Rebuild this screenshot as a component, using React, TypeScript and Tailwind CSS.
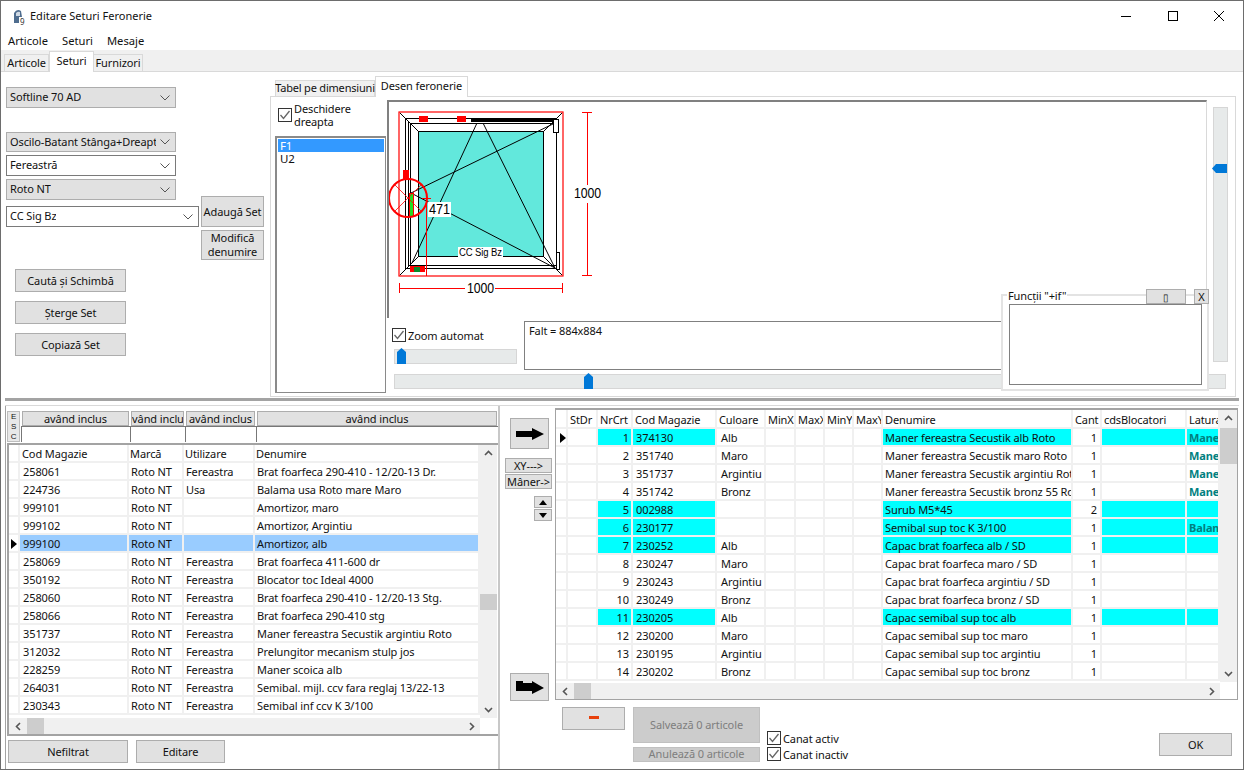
import { ReactNode } from 'react';

const leftRows = [
  ['258061', 'Roto NT', 'Fereastra', 'Brat foarfeca 290-410 - 12/20-13 Dr.'],
  ['224736', 'Roto NT', 'Usa', 'Balama usa Roto mare Maro'],
  ['999101', 'Roto NT', '', 'Amortizor, maro'],
  ['999102', 'Roto NT', '', 'Amortizor, Argintiu'],
  ['999100', 'Roto NT', '', 'Amortizor, alb'],
  ['258069', 'Roto NT', 'Fereastra', 'Brat foarfeca 411-600 dr'],
  ['350192', 'Roto NT', 'Fereastra', 'Blocator toc Ideal 4000'],
  ['258060', 'Roto NT', 'Fereastra', 'Brat foarfeca 290-410 - 12/20-13 Stg.'],
  ['258066', 'Roto NT', 'Fereastra', 'Brat foarfeca 290-410 stg'],
  ['351737', 'Roto NT', 'Fereastra', 'Maner fereastra Secustik argintiu Roto'],
  ['312032', 'Roto NT', 'Fereastra', 'Prelungitor mecanism stulp jos'],
  ['228259', 'Roto NT', 'Fereastra', 'Maner scoica alb'],
  ['264031', 'Roto NT', 'Fereastra', 'Semibal. mijl. ccv fara reglaj 13/22-13'],
  ['230343', 'Roto NT', 'Fereastra', 'Semibal inf ccv K 3/100'],
];

// nr, cod, culoare, denumire, cant, latura, cyan
const rightRows: [number, string, string, string, number, string, boolean][] = [
  [1, '374130', 'Alb', 'Maner fereastra Secustik alb Roto', 1, 'Maner', true],
  [2, '351740', 'Maro', 'Maner fereastra Secustik maro Roto', 1, 'Maner', false],
  [3, '351737', 'Argintiu', 'Maner fereastra Secustik argintiu Roto', 1, 'Maner', false],
  [4, '351742', 'Bronz', 'Maner fereastra Secustik bronz 55 Roto', 1, 'Maner', false],
  [5, '002988', '', 'Surub M5*45', 2, '', true],
  [6, '230177', '', 'Semibal sup toc K 3/100', 1, 'Balama', true],
  [7, '230252', 'Alb', 'Capac brat foarfeca alb / SD', 1, '', true],
  [8, '230247', 'Maro', 'Capac brat foarfeca maro / SD', 1, '', false],
  [9, '230243', 'Argintiu', 'Capac brat foarfeca argintiu / SD', 1, '', false],
  [10, '230249', 'Bronz', 'Capac brat foarfeca bronz / SD', 1, '', false],
  [11, '230205', 'Alb', 'Capac semibal sup toc alb', 1, '', true],
  [12, '230200', 'Maro', 'Capac semibal sup toc maro', 1, '', false],
  [13, '230195', 'Argintiu', 'Capac semibal sup toc argintiu', 1, '', false],
  [14, '230202', 'Bronz', 'Capac semibal sup toc bronz', 1, '', false],
];

const rightHead = ['', 'StDr', 'NrCrt', 'Cod Magazie', 'Culoare', 'MinX', 'MaxX', 'MinY', 'MaxY', 'Denumire', 'Cant', 'cdsBlocatori', 'Latura'];

function Btn({ className, children }: { className: string; children: ReactNode }) {
  return (
    <button className={`flex items-center justify-center shrink-0 whitespace-nowrap bg-[#e1e1e1] border border-[#adadad] text-[#111] leading-[14px] ${className}`}>
      {children}
    </button>
  );
}

function Chevron() {
  return (
    <svg width="10" height="6" viewBox="0 0 10 6" className="shrink-0 ml-[4px]">
      <path d="M0.5 0.5 L5 5 L9.5 0.5" fill="none" stroke="#555" strokeWidth="1" />
    </svg>
  );
}

function Combo({ label, white, className }: { label: string; white?: boolean; className: string }) {
  return (
    <div className={`flex items-center justify-between pl-[3px] pr-[5px] border ${white ? 'bg-white border-[#7a7a7a]' : 'bg-[#e1e1e1] border-[#adadad]'} ${className}`}>
      <span className="whitespace-nowrap overflow-hidden">{label}</span>
      <Chevron />
    </div>
  );
}

function Check({ label, className }: { label: ReactNode; className?: string }) {
  return (
    <div className={`flex items-start gap-[2px] ${className ?? ''}`}>
      <span className="w-[14px] h-[14px] border border-[#333] bg-white shrink-0 flex items-center justify-center">
        <svg width="12" height="12" viewBox="0 0 12 12">
          <path d="M1.5 6 L4.5 9.5 L10.5 2" fill="none" stroke="#666" strokeWidth="1.3" />
        </svg>
      </span>
      <span className="leading-[13px] pt-px whitespace-nowrap">{label}</span>
    </div>
  );
}

function Arrow({ dir }: { dir: 'up' | 'down' | 'left' | 'right' }) {
  const d = {
    up: 'M1 6 L4.5 2.5 L8 6',
    down: 'M1 3 L4.5 6.5 L8 3',
    left: 'M6 1 L2.5 4.5 L6 8',
    right: 'M3 1 L6.5 4.5 L3 8',
  }[dir];
  return (
    <svg width="9" height="9" viewBox="0 0 9 9">
      <path d={d} fill="none" stroke="#555" strokeWidth="1.6" />
    </svg>
  );
}

function VScroll({ thumb }: { thumb: string }) {
  return (
    <div className="w-[17px] h-full bg-[#f0f0f0] flex flex-col items-center justify-between relative shrink-0 py-[4px]">
      <Arrow dir="up" />
      <div className={`absolute left-0 w-[17px] bg-[#cdcdcd] ${thumb}`} />
      <Arrow dir="down" />
    </div>
  );
}

function HScroll({ className }: { className: string }) {
  return (
    <div className={`h-[16px] bg-[#f0f0f0] flex items-center shrink-0 ${className}`}>
      <span className="w-[18px] flex justify-center shrink-0"><Arrow dir="left" /></span>
      <div className="w-[17px] h-[16px] bg-[#cdcdcd]" />
      <span className="ml-auto mr-[4px] flex"><Arrow dir="right" /></span>
    </div>
  );
}

function Drawing() {
  const red = '#ff0000';
  return (
    <svg viewBox="389 102 817 216" className="w-full h-full block">
      <rect x="418.5" y="131.5" width="125" height="125" fill="#62e8dc" stroke="#000" />
      <g fill="none" stroke="#000" strokeWidth="1">
        <rect x="405.5" y="118.5" width="151" height="150" />
        <rect x="410.5" y="123.5" width="146" height="142" />
        <path d="M408.5 121 V266 M400 113 L418 131 M562 113 L544 131 M400 275 L418 257 M562 275 L544 257" />
        <path d="M477 123 L412 263 M483 123 L555 268 M555 123 L411 193 L555 268" />
      </g>
      <rect x="399" y="112" width="164" height="164" fill="none" stroke={red} strokeWidth="1.2" />
      <rect x="471" y="118" width="85" height="4" fill="#000" />
      <rect x="553.5" y="119.5" width="5" height="13" fill="#fff" stroke="#000" />
      <rect x="556.5" y="252.5" width="3" height="17" fill="#fff" stroke="#000" />
      <rect x="419" y="116" width="9" height="6" fill={red} />
      <rect x="457" y="116" width="9" height="6" fill={red} />
      <rect x="403" y="170" width="6" height="10" fill={red} />
      <rect x="410" y="266" width="15" height="6" fill={red} />
      <rect x="414" y="267" width="6" height="5" fill="#0a8a2a" />
      <rect x="409.5" y="193.5" width="4" height="23" fill="#22dd22" stroke={red} />
      <circle cx="408" cy="198" r="19" fill="none" stroke={red} strokeWidth="2" />
      <path d="M395 185 L421 211 M421 185 L395 211" stroke={red} strokeWidth="0.8" />
      <path d="M426.5 198 V276 M422 198.5 H431" stroke={red} strokeWidth="1" />
      <rect x="428" y="202" width="23" height="15" fill="#fff" />
      <text x="429" y="214" fontSize="14" fill="#000" textLength="21" lengthAdjust="spacingAndGlyphs">471</text>
      <rect x="458" y="247" width="45" height="10" fill="#fff" />
      <text x="459" y="256" fontSize="10" fill="#000" textLength="43" lengthAdjust="spacingAndGlyphs">CC Sig Bz</text>
      <path d="M587.5 112 V185 M587.5 203 V276 M582 112.5 H592 M582 275.5 H592" stroke={red} strokeWidth="1" />
      <text x="574" y="198" fontSize="14" fill="#000" textLength="27" lengthAdjust="spacingAndGlyphs">1000</text>
      <path d="M399.5 283 V293 M562.5 283 V293 M399 288.5 H465 M495 288.5 H563" stroke={red} strokeWidth="1" />
      <text x="467" y="293" fontSize="14" fill="#000" textLength="27" lengthAdjust="spacingAndGlyphs">1000</text>
    </svg>
  );
}

export default function App() {
  return (
    <div className="relative w-[1244px] h-[770px] box-border overflow-hidden flex flex-col bg-white border border-[#6d6d6d] text-[11px] tracking-[-0.1px] text-[#111] font-['Noto_Sans',sans-serif]">
      {/* title bar */}
      <div className="h-[31px] flex items-center shrink-0">
        <svg width="16" height="18" viewBox="0 0 16 18" className="ml-[10px] mr-[3px]">
          <path d="M3 15 V5 Q6 0 10 3 L11 9 L8 9 L8 15 Z" fill="#4f6d8f" />
          <path d="M5 5 Q7 3 9 4 L9 8 L5 8 Z" fill="#cfd9e4" />
          <text x="9" y="17" fontSize="8" fill="#333">9</text>
        </svg>
        <span className="tracking-normal">Editare Seturi Feronerie</span>
        <div className="ml-auto flex items-center pb-[2px]">
          <svg width="12" height="12" viewBox="0 0 12 12" className="mr-[35px]"><path d="M1 6.5 H11" stroke="#000" /></svg>
          <svg width="12" height="12" viewBox="0 0 12 12" className="mr-[34px]"><rect x="1.5" y="1.5" width="9" height="9" fill="none" stroke="#000" /></svg>
          <svg width="12" height="12" viewBox="0 0 12 12" className="mr-[18px]"><path d="M1 1 L11 11 M11 1 L1 11" stroke="#000" /></svg>
        </div>
      </div>

      {/* menu */}
      <div className="h-[18px] flex items-center gap-[14px] pl-[7px] text-[11.2px] tracking-normal shrink-0">
        <span>Articole</span>
        <span>Seturi</span>
        <span>Mesaje</span>
      </div>

      {/* page tabs */}
      <div className="h-[21px] bg-[#f0f0f0] flex items-end pl-[3px] shrink-0">
        <div className="w-[45px] h-[17px] border border-b-0 border-[#d9d9d9] bg-[#f0f0f0] flex items-center justify-center">Articole</div>
        <div className="w-[45px] h-[21px] border border-b-0 border-[#d9d9d9] bg-white flex items-center justify-center pb-[2px] -mb-px z-10">Seturi</div>
        <div className="w-[49px] h-[17px] border border-b-0 border-l-0 border-[#d9d9d9] bg-[#f0f0f0] flex items-center justify-center">Furnizori</div>
      </div>

      <div className="border-t border-[#d9d9d9] flex-1 flex flex-col min-h-0">
        {/* top pane */}
        <div className="h-[326px] flex shrink-0">
          <div className="w-[269px] shrink-0 pl-[5px] pt-[15px]">
            <Combo label="Softline 70 AD" className="w-[170px] h-[21px]" />
            <div className="flex mt-[24px]">
              <div className="w-[193px] flex flex-col">
                <Combo label="Oscilo-Batant Stânga+Dreapta" className="w-[170px] h-[20px]" />
                <Combo label="Fereastră" white className="w-[170px] h-[21px] mt-[3px]" />
                <Combo label="Roto NT" className="w-[170px] h-[21px] mt-[3px]" />
                <Combo label="CC Sig Bz" white className="w-[193px] h-[21px] mt-[6px]" />
              </div>
              <div className="ml-[2px] mt-[64px] flex flex-col">
                <Btn className="w-[63px] h-[31px]">Adaugă Set</Btn>
                <Btn className="w-[63px] h-[30px] mt-[3px]"><span>Modifică<br />denumire</span></Btn>
              </div>
            </div>
            <div className="ml-[9px] mt-[9px] flex flex-col gap-[9px]">
              <Btn className="w-[111px] h-[23px]">Caută și Schimbă</Btn>
              <Btn className="w-[111px] h-[23px]">Șterge Set</Btn>
              <Btn className="w-[111px] h-[23px]">Copiază Set</Btn>
            </div>
          </div>

          <div className="flex-1 pt-[4px] flex flex-col">
            <div className="h-[20px] flex items-end pl-[5px] shrink-0">
              <div className="w-[100px] h-[16px] border border-b-0 border-[#d9d9d9] bg-[#f0f0f0] flex items-center justify-center whitespace-nowrap tracking-[-0.2px]">Tabel pe dimensiuni</div>
              <div className="w-[93px] h-[21px] border border-b-0 border-[#d9d9d9] bg-white flex items-center justify-center pb-[2px] -mb-px z-10 whitespace-nowrap">Desen feronerie</div>
            </div>
            <div className="w-[966px] h-[301px] border border-[#d9d9d9] flex">
              <div className="w-[116px] shrink-0 pt-[11px] pl-[7px]">
                <Check label={<span className="block -mt-[7px]">Deschidere<br />dreapta</span>} className="h-[28px]" />
                <div className="-ml-[3px] w-[111px] h-[257px] border-2 border-[#8a8a8a] border-r border-b pt-px px-px text-[11.5px] leading-[13px]">
                  <div className="bg-[#3399ff] text-white pl-[2px]">F1</div>
                  <div className="pl-[2px]">U2</div>
                </div>
              </div>
              <div className="flex-1 pt-[3px]">
                <div className="h-[270px] flex">
                  <div className="w-[820px] flex flex-col">
                    <div className="h-[218px] border-t-2 border-l-2 border-[#808080] border-r border-r-[#d9d9d9] bg-white font-['Liberation_Sans',sans-serif]">
                      <Drawing />
                    </div>
                    <div className="h-[52px] flex pl-[5px]">
                      <div className="w-[132px] shrink-0">
                        <Check label="Zoom automat" className="mt-[10px] h-[16px]" />
                        <div className="relative ml-[2px] mt-[5px] w-[123px] h-[15px] bg-[#e7eaea] border border-[#d6d6d6]">
                          <svg width="9" height="16" viewBox="0 0 9 16" className="absolute left-[2px] -top-[2px]"><path d="M0 4 L4.5 0 L9 4 V16 H0 Z" fill="#0078d7" /></svg>
                        </div>
                      </div>
                      <div className="mt-[3px] h-[49px] w-[478px] border border-[#808080] pl-[4px] pt-px">Falt = 884x884</div>
                    </div>
                  </div>
                  <div className="relative ml-[6px] mt-[7px] w-[15px] h-[255px] bg-[#e7eaea] border border-[#d6d6d6]">
                    <svg width="16" height="9" viewBox="0 0 16 9" className="absolute -left-[2px] top-[56px]"><path d="M4 0 L0 4.5 L4 9 H15 V0 Z" fill="#0078d7" /></svg>
                  </div>
                </div>
                <div className="relative ml-[7px] mt-[4px] w-[832px] h-[15px] bg-[#e7eaea] border border-[#d6d6d6]">
                  <svg width="9" height="16" viewBox="0 0 9 16" className="absolute left-[189px] -top-[2px]"><path d="M0 4 L4.5 0 L9 4 V16 H0 Z" fill="#0078d7" /></svg>
                </div>
              </div>
            </div>
          </div>
        </div>

        {/* splitter */}
        <div className="h-[3px] mx-[4px] bg-[#a3a3a3] shrink-0" />

        {/* bottom pane */}
        <div className="mt-[4px] ml-[4px] mr-[4px] border-t border-[#d9d9d9] flex-1 flex min-h-0">
          <div className="w-[495px] shrink-0 border-l border-r-2 border-l-[#a3a3a3] border-r-[#c8c8c8] pl-px pt-[5px]">
            <div className="flex h-[31px]">
              <div className="w-[13px] h-[31px] border border-[#bdbdbd] bg-[#e8e8e8] flex flex-col items-center text-[8px] leading-[10px] font-['Liberation_Sans',sans-serif]">
                <span>E</span><span>S</span><span>C</span>
              </div>
              <div className="grid grid-cols-[109px_55px_71px_242px] pl-[1px]">
                {[0, 1, 2, 3].map((i) => (
                  <div key={i} className="flex flex-col">
                    <div className="h-[15px] mx-px pt-[2px] bg-[#e1e1e1] border border-[#adadad] flex items-center justify-center whitespace-nowrap overflow-hidden">având inclus</div>
                    <div className="h-[16px] bg-white border-t border-l border-[#777]" />
                  </div>
                ))}
              </div>
            </div>
            <div className="mt-px h-[293px] border-l-2 border-t-2 border-b-2 border-[#a3a3a3] flex flex-col">
              <div className="flex h-[273px] shrink-0">
                <div className="w-[471px] shrink-0">
                  {[['', ...['Cod Magazie', 'Marcă', 'Utilizare', 'Denumire']], ...leftRows.map((r) => ['', ...r])].map((r, i) => {
                    const sel = i === 5;
                    return (
                      <div key={i} className="grid grid-cols-[11px_109px_55px_71px_225px] h-[18px]">
                        {r.map((c, j) => (
                          <div key={j} className={`border-r-2 border-b-2 border-[#f0f0f0] overflow-hidden whitespace-nowrap leading-[16px] flex items-center pt-px ${j === 0 ? '' : j === 1 ? (i === 0 ? 'pl-[2px]' : 'pl-[3px]') : i === 0 ? 'pl-[1px]' : 'pl-[2px]'} ${sel && j > 0 ? 'bg-[#99ccff]' : ''}`}>
                            {sel && j === 0 && <span className="w-0 h-0 border-y-[5px] border-y-transparent border-l-[6px] border-l-black ml-[2px]" />}
                            {c}
                          </div>
                        ))}
                      </div>
                    );
                  })}
                </div>
                <VScroll thumb="top-[149px] h-[16px]" />
              </div>
              <HScroll className="w-[471px]" />
            </div>
            <div className="flex mt-[4px] ml-[1px] gap-[8px]">
              <Btn className="w-[120px] h-[23px]">Nefiltrat</Btn>
              <Btn className="w-[89px] h-[23px]">Editare</Btn>
            </div>
          </div>

          <div className="w-[55px] shrink-0 flex flex-col pt-[12px]">
            <Btn className="ml-[10px] w-[39px] h-[31px]">
              <svg width="28" height="12" viewBox="0 0 28 12"><path d="M0 3 H16 V0 L28 6 L16 12 V9 H0 Z" fill="#000" /></svg>
            </Btn>
            <Btn className="ml-[5px] mt-[9px] w-[47px] h-[15px]">XY---&gt;</Btn>
            <Btn className="ml-[5px] mt-px w-[47px] h-[15px]">Mâner-&gt;</Btn>
            <Btn className="ml-[34px] mt-[7px] w-[18px] h-[12px]">
              <span className="w-0 h-0 border-x-[4px] border-x-transparent border-b-[5px] border-b-black" />
            </Btn>
            <Btn className="ml-[34px] mt-px w-[18px] h-[12px]">
              <span className="w-0 h-0 border-x-[4px] border-x-transparent border-t-[5px] border-t-black" />
            </Btn>
            <Btn className="ml-[10px] mt-[152px] w-[39px] h-[28px]">
              <svg width="28" height="13" viewBox="0 0 28 13"><path d="M0 0 H7 V2 H16 V0 L28 7 L16 13 V10 H0 Z" fill="#000" /></svg>
            </Btn>
          </div>

          <div className="flex-1 flex flex-col pt-[2px] min-w-0">
            <div className="h-[292px] w-[683px] border-l border-t-2 border-r border-b border-[#a3a3a3] flex flex-col shrink-0">
              <div className="flex h-[272px] shrink-0">
                <div className="w-[664px] shrink-0">
                  <div className="grid grid-cols-[12px_30px_35px_84px_49px_30px_29px_29px_29px_190px_29px_85px_33px] h-[19px]">
                    {rightHead.map((h, i) => (
                      <div key={i} className="border-r-2 border-b-2 border-[#f0f0f0] pl-[2px] pt-px overflow-hidden whitespace-nowrap leading-[17px]">{h}</div>
                    ))}
                  </div>
                  {rightRows.map(([nr, cod, cul, den, cant, lat, cyan], i) => {
                    const fill = cyan ? 'bg-[#00ffff]' : '';
                    const cell = 'border-r-2 border-b-2 border-[#f0f0f0] overflow-hidden whitespace-nowrap leading-[16px] pt-px';
                    return (
                      <div key={nr} className="grid grid-cols-[12px_30px_35px_84px_49px_30px_29px_29px_29px_190px_29px_85px_33px] h-[18px]">
                        <div className={`${cell} flex items-center`}>
                          {i === 0 && <span className="w-0 h-0 border-y-[5px] border-y-transparent border-l-[6px] border-l-black ml-[4px]" />}
                        </div>
                        <div className={cell} />
                        <div className={`${cell} ${fill} text-right pr-[2px]`}>{nr}</div>
                        <div className={`${cell} ${fill} pl-[3px]`}>{cod}</div>
                        <div className={`${cell} pl-[4px]`}>{cul}</div>
                        <div className={cell} />
                        <div className={cell} />
                        <div className={cell} />
                        <div className={cell} />
                        <div className={`${cell} ${fill} pl-[2px]`}>{den}</div>
                        <div className={`${cell} text-right pr-[3px]`}>{cant}</div>
                        <div className={`${cell} ${fill}`} />
                        <div className={`${cell} ${fill} pl-[2px] font-bold text-[#008080]`}>{lat}</div>
                      </div>
                    );
                  })}
                </div>
                <VScroll thumb="top-[18px] h-[36px]" />
              </div>
              <HScroll className="mt-px w-[664px]" />
            </div>
            <div className="flex pt-[7px] pl-[7px]">
              <Btn className="w-[63px] h-[23px] pb-[3px]">
                <span className="block w-[10px] h-[3px] bg-[#e8410c]" />
              </Btn>
              <div className="ml-[8px] flex flex-col">
                <div className="w-[127px] h-[36px] bg-[#cccccc] border border-[#c0c0c0] text-[#7e7e7e] flex items-center justify-center">Salvează 0 articole</div>
                <div className="w-[127px] h-[15px] mt-[4px] bg-[#cccccc] border border-[#c0c0c0] text-[#7e7e7e] flex items-center justify-center">Anulează 0 articole</div>
              </div>
              <div className="ml-[7px] mt-[24px] flex flex-col gap-[2px]">
                <Check label="Canat activ" />
                <Check label="Canat inactiv" />
              </div>
              <Btn className="ml-[311px] mt-[26px] w-[73px] h-[23px]">OK</Btn>
            </div>
          </div>
        </div>
      </div>

      {/* floating functions panel */}
      <div className="absolute left-[1000px] top-[293px] w-[208px] h-[97px] bg-white border-2 border-[#e3e3e3] z-20">
        <span className="absolute left-[4px] -top-[7px] bg-white px-px leading-[13px]">Funcții "+if"</span>
        <div className="absolute left-[6px] top-[8px] w-[193px] h-[81px] border border-[#808080]" />
      </div>
      <Btn className="absolute left-[1145px] top-[288px] w-[40px] h-[15px] z-30 text-[10px]">▯</Btn>
      <Btn className="absolute left-[1193px] top-[288px] w-[15px] h-[15px] z-30">X</Btn>
    </div>
  );
}
